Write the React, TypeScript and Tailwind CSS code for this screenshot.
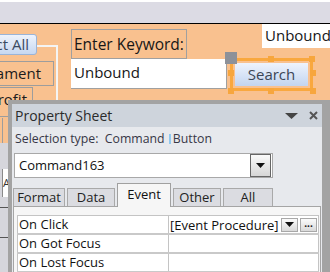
import React from "react";

// Access-style form design canvas with the Property Sheet docked over it

const tabs = [
  { label: "Format", w: "w-[52px]" },
  { label: "Data", w: "w-[48px]" },
  { label: "Event", w: "w-[54px]", active: true },
  { label: "Other", w: "w-[48px]" },
  { label: "All", w: "w-[50px]" },
];

const rows = [
  { label: "On Click", value: "[Event Procedure]" },
  { label: "On Got Focus", value: "" },
  { label: "On Lost Focus", value: "" },
];

function Caret({ className = "" }: { className?: string }) {
  return (
    <svg width="9" height="5" viewBox="0 0 9 5" className={className}>
      <polygon points="0,0 9,0 4.5,5" fill="#111" />
    </svg>
  );
}

function Handle({ className }: { className: string }) {
  return <div className={`absolute w-[6px] h-[6px] bg-[#f7a63d] ${className}`} />;
}

export default function App() {
  return (
    <div className="relative w-[330px] h-[272px] overflow-hidden bg-[#f9c18f] font-['Open_Sans',sans-serif]">
      {/* top band */}
      <div className="h-[24px] border-t-2 border-white bg-[#dcdbe4] border-b border-b-black" />

      {/* form canvas controls */}
      <div className="absolute left-0 top-[45px] w-[58px] h-[90px] border-t-2 border-r-2 border-[#f4f4f4]" />
      <div className="absolute left-[-60px] top-[34px] w-[97px] h-[21px] rounded-[3px] border border-[#9ab4d8] bg-gradient-to-b from-[#eef3fc] to-[#c7d8f1] flex items-center justify-end pr-[7px] text-[15px] leading-none text-[#3b4b61]">
        Select All
      </div>
      <div className="absolute left-[-40px] top-[61px] w-[94px] h-[25px] border border-[#9d9d9d] flex items-center justify-end pr-[12px] text-[15px] text-[#1c1c1c]">
        ament
      </div>
      <div className="absolute left-[-40px] top-[87px] w-[73px] h-[30px] border border-[#9d9d9d] flex items-start justify-end pr-[5px] pt-[1px] text-[15px] leading-[20px] text-[#1c1c1c]">
        Profit
      </div>
      <div className="absolute left-[2px] top-[118px] w-[6px] h-[25px] border-l border-[#9d9d9d]" />
      <div className="absolute left-0 top-[143px] w-[8px] h-[129px] bg-[#d6d6dc]">
        <div className="mt-[26px] ml-[2px] h-[28px] bg-white border-l border-[#8a8a8a] text-[11px] leading-[28px] text-[#333]">A</div>
        <div className="mt-[10px] h-px bg-[#555]" />
        <div className="mt-[29px] h-px bg-[#555]" />
      </div>

      <div className="absolute left-[71px] top-[29px] w-[116px] h-[30px] border border-[#a0a0a0] pl-[2px] text-[15.5px] leading-[28px] text-[#161616]">
        Enter Keyword:
      </div>
      <div className="absolute left-[71px] top-[59px] w-[156px] h-[30px] bg-white border-r border-b border-[#a0a0a0] pl-[3px] text-[15px] leading-[27px] text-[#161616]">
        Unbound
      </div>
      <div className="absolute left-[262px] top-[24px] w-[80px] h-[24px] bg-white pl-[3px] text-[15px] leading-[22px] text-[#161616]">
        Unbound
      </div>

      {/* selected command button */}
      <div className="absolute left-[230px] top-[58px] w-[83px] h-[33px] border-[3px] border-[#f9a83f]">
        <div className="absolute inset-[2px] bg-gradient-to-b from-[#eef3fc] to-[#c3d5f0] flex items-center justify-center text-[15px] text-[#3b4656]">
          Search
        </div>
      </div>
      <Handle className="left-[268px] top-[56px]" />
      <Handle className="left-[309px] top-[56px]" />
      <Handle className="left-[228px] top-[70px]" />
      <Handle className="left-[310px] top-[70px]" />
      <Handle className="left-[228px] top-[88px]" />
      <Handle className="left-[268px] top-[88px]" />
      <Handle className="left-[310px] top-[88px]" />
      <div className="absolute left-[225px] top-[52px] w-[12px] h-[12px] bg-[#8d9199]" />

      {/* property sheet */}
      <div className="absolute left-[8px] top-[100px] w-[322px] h-[180px] border-t-[4px] border-l-[4px] border-r-[8px] border-[#a3a3a3] bg-[#e7e9ed] flex flex-col">
        <div className="h-[23px] shrink-0 bg-[#ced4dc] flex items-center pl-[3px] pr-[4px]">
          <span className="text-[14px] text-[#2b2b2b]">Property Sheet</span>
          <svg width="13" height="6" viewBox="0 0 13 6" className="ml-auto">
            <polygon points="0,0 13,0 6.5,6" fill="#444" />
          </svg>
          <svg width="9" height="9" viewBox="0 0 9 9" className="ml-[11px] mr-[0px]">
            <path d="M1 1 L8 8 M8 1 L1 8" stroke="#555" strokeWidth="2" />
          </svg>
        </div>

        <div className="pl-[3px] pt-[2px] h-[22px] text-[12.3px] leading-[20px] text-[#373746] whitespace-pre flex items-center">
          <span>Selection type:  Command </span>
          <span className="w-[2px] h-[10px] bg-[#8fc8ef] ml-[1px] mr-[2px]" />
          <span>Button</span>
        </div>

        <div className="mt-[4px] ml-[2px] w-[259px] h-[25px] bg-white border border-[#a8a8a8] flex items-center pl-[4px] pr-[1px]">
          <span className="text-[13px] text-[#111]">Command163</span>
          <div className="ml-auto w-[21px] h-[23px] border border-[#666] bg-gradient-to-b from-[#fafafa] to-[#d6d6d6] flex items-center justify-center">
            <Caret />
          </div>
        </div>

        <div className="mt-[5px] ml-[1px] flex items-end gap-[2px] h-[23px] relative z-10">
          {tabs.map((t) =>
            t.active ? (
              <div
                key={t.label}
                className={`${t.w} h-[24px] -mb-px bg-[#f6f6f6] border border-b-0 border-[#a0a0a0] flex items-start justify-center pt-[1px] text-[13px] text-[#111]`}
              >
                {t.label}
              </div>
            ) : (
              <div
                key={t.label}
                className={`${t.w} h-[18px] bg-[#dbdce1] border border-b-0 border-[#a9a9a9] flex items-center justify-center text-[13px] text-[#222]`}
              >
                {t.label}
              </div>
            )
          )}
        </div>

        <div className="ml-[1px] mr-[1px] flex-1 bg-[#f6f6f6] border border-[#a5a5a5] pt-[8px] pl-[3px] pr-[1px]">
          <div className="border-t border-[#c4c4c4] bg-[#c9c9c9] flex flex-col gap-[2px] pb-[2px]">
            {rows.map((r, i) => (
              <div key={r.label} className="h-[17px] flex bg-white border-x border-[#c4c4c4]">
                <div className="w-[151px] border-r border-[#c4c4c4] pl-[1px] text-[13px] leading-[16px] text-[#111]">
                  {r.label}
                </div>
                <div className="flex-1 flex items-center pl-[1px] text-[13px] leading-[16px] text-[#111]">
                  <span>{r.value}</span>
                  {i === 0 && (
                    <div className="ml-auto flex gap-[2px] pr-[1px]">
                      <div className="w-[17px] h-[14px] border border-[#a8a8a8] bg-gradient-to-b from-[#fbfbfb] to-[#d9d9d9] flex items-center justify-center">
                        <Caret />
                      </div>
                      <div className="w-[17px] h-[14px] border border-[#a8a8a8] bg-gradient-to-b from-[#fbfbfb] to-[#d9d9d9] flex items-center justify-center text-[10px] font-bold leading-none pb-[3px] text-[#111]">
                        ...
                      </div>
                    </div>
                  )}
                </div>
              </div>
            ))}
          </div>
        </div>
      </div>
    </div>
  );
}
